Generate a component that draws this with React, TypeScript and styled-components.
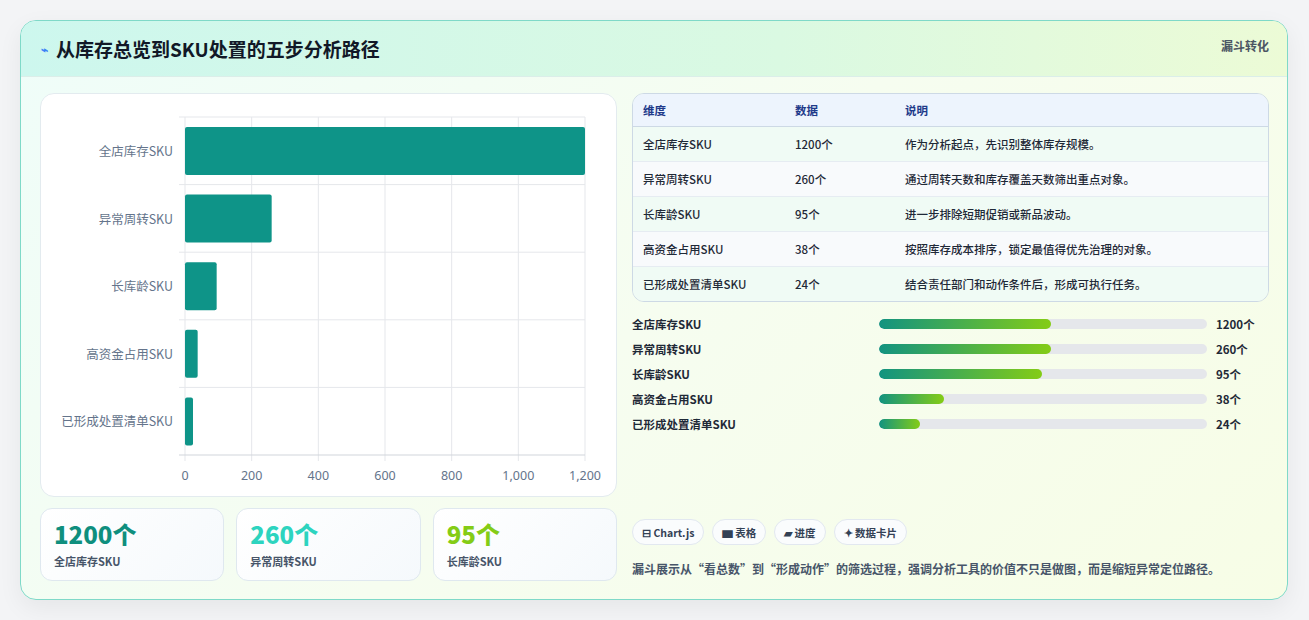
import React from "react";
import styled, { createGlobalStyle } from "styled-components";

const Global = createGlobalStyle`
  html, body { margin: 0; padding: 0; background: #f3f4f6; }
  body { font-family: "Noto Sans CJK SC", "Noto Sans", sans-serif; color: #1f2937; }
`;

const Page = styled.div`
  width: 1309px; height: 620px; box-sizing: border-box; padding: 20px 21px 20px 20px;
`;
const Card = styled.div`
  height: 580px; box-sizing: border-box; border: 1px solid #7fd9c8; border-radius: 16px; overflow: hidden;
  background: linear-gradient(135deg, #effdf9 0%, #f6fdf0 50%, #f7fde6 100%);
  box-shadow: 0 8px 24px rgba(0,0,0,0.06);
  display: flex; flex-direction: column;
`;
const Header = styled.div`
  height: 55px; flex: none; display: flex; align-items: flex-start; justify-content: space-between;
  padding: 0 18px 0 20px; border-bottom: 1px solid #dbeee9;
  background: linear-gradient(90deg, #cdf7ee 0%, #daf9e2 60%, #ecfbd6 100%);
`;
const Title = styled.h1`
  margin: 14px 0 0; font-size: 19px; font-weight: 700; color: #111827; display: flex; align-items: center; gap: 8px;
`;
const Tag = styled.span`margin-top: 16px; font-size: 12px; font-weight: 700; color: #4b5563;`;
const Body = styled.div`
  flex: 1; display: grid; grid-template-columns: 577px 637px; gap: 15px; padding: 16px 18px 18px 19px;
`;
const Left = styled.div`display: flex; flex-direction: column; gap: 11px;`;
const ChartBox = styled.div`
  height: 404px; box-sizing: border-box; background: #fff; border: 1px solid #e3ebef; border-radius: 14px; overflow: hidden;
`;
const Kpis = styled.div`display: grid; grid-template-columns: repeat(3, 1fr); gap: 12px;`;
const Kpi = styled.div`
  height: 73px; box-sizing: border-box; border: 1px solid #dfe8ef; border-radius: 12px; padding: 10px 13px;
  background: linear-gradient(135deg, #ffffff, #f5f9fc);
`;
const KpiVal = styled.div<{ $c: string }>`font-size: 24px; font-weight: 800; color: ${p => p.$c}; line-height: 30px;`;
const KpiLbl = styled.div`font-size: 11px; font-weight: 700; color: #475569; margin-top: 4px;`;

const Right = styled.div`display: flex; flex-direction: column;`;
const Table = styled.table`
  width: 100%; border-collapse: separate; border-spacing: 0; border: 1px solid #cdd9e5; border-radius: 12px; overflow: hidden;
  font-size: 11.5px; font-weight: 500;
  th { text-align: left; font-weight: 700; color: #1e3a8a; background: #edf4fd; height: 32px; padding: 0 10px; border-bottom: 1px solid #cdd9e5; }
  td { height: 34px; padding: 0 10px; color: #1f2937; border-bottom: 1px solid #e6ecf2; }
  tr:last-child td { border-bottom: none; }
  tbody tr:nth-child(odd) td { background: #f0fbf5; }
  tbody tr:nth-child(even) td { background: #f8fafc; }
`;
const Bars = styled.div`display: flex; flex-direction: column; gap: 7px; margin-top: 13px;`;
const BarRow = styled.div`display: grid; grid-template-columns: 238px 328px auto; align-items: center; gap: 0 9px; font-size: 11.5px; font-weight: 700; height: 18px;`;
const Track = styled.div`height: 10px; border-radius: 5px; background: #e5e7eb; overflow: hidden;`;
const Fill = styled.div`height: 100%; border-radius: 5px; background: linear-gradient(90deg, #129380, #84cc16);`;
const Spacer = styled.div`flex: 1;`;
const Chips = styled.div`display: flex; gap: 8px;`;
const Chip = styled.span`
  height: 26px; box-sizing: border-box; padding: 0 9px; border: 1px solid #e2e8f0; border-radius: 13px; background: #fafcfd;
  font-size: 10.5px; font-weight: 700; color: #334155; display: inline-flex; align-items: center; gap: 4px;
`;
const Note = styled.p`margin: 15px 0 4px; font-size: 12px; font-weight: 700; color: #475569;`;

const cats = ["全店库存SKU", "异常周转SKU", "长库龄SKU", "高资金占用SKU", "已形成处置清单SKU"];
const vals = [1200, 260, 95, 38, 24];
const desc = ["作为分析起点，先识别整体库存规模。", "通过周转天数和库存覆盖天数筛出重点对象。", "进一步排除短期促销或新品波动。", "按照库存成本排序，锁定最值得优先治理的对象。", "结合责任部门和动作条件后，形成可执行任务。"];
const pct = [52.3, 52.3, 49.8, 19.9, 12.5];

function Chart() {
  const x0 = 144, w = 400, y0 = 23, rh = 67.6;
  const ticks = [0, 200, 400, 600, 800, 1000, 1200];
  return (
    <svg width="576" height="404" style={{ display: "block" }}>
      {ticks.map(t => { const x = x0 + (t / 1200) * w; return <line key={t} x1={x} x2={x} y1={y0} y2={y0 + 5 * rh + 6} stroke="#e5e7eb" />; })}
      {[0, 1, 2, 3, 4].map(i => <line key={i} x1={x0 - 6} x2={x0 + w} y1={y0 + i * rh} y2={y0 + i * rh} stroke="#e5e7eb" />)}
      <line x1={x0 - 6} x2={x0 + w} y1={y0 + 5 * rh} y2={y0 + 5 * rh} stroke="#d1d5db" />
      {vals.map((v, i) => (
        <g key={i}>
          <rect x={x0} y={y0 + i * rh + 10} width={(v / 1200) * w} height={48} rx={2} fill="#0e9488" />
          <text x={132} y={y0 + i * rh + 39} textAnchor="end" fontSize="12.5" fill="#64748b" fontFamily="Noto Sans CJK SC, sans-serif">{cats[i]}</text>
        </g>
      ))}
      {ticks.map(t => <text key={t} x={x0 + (t / 1200) * w} y={386} textAnchor="middle" fontSize="12.5" fill="#64748b" fontFamily="Noto Sans, sans-serif">{t.toLocaleString("en-US")}</text>)}
    </svg>
  );
}

export default function App() {
  return (
    <Page>
      <Global />
      <Card>
        <Header>
          <Title><span style={{ color: "#3b82f6", fontSize: 12 }}>⌁</span>从库存总览到SKU处置的五步分析路径</Title>
          <Tag>漏斗转化</Tag>
        </Header>
        <Body>
          <Left>
            <ChartBox><Chart /></ChartBox>
            <Kpis>
              <Kpi><KpiVal $c="#0f8f7e">1200个</KpiVal><KpiLbl>全店库存SKU</KpiLbl></Kpi>
              <Kpi><KpiVal $c="#2dd4bf">260个</KpiVal><KpiLbl>异常周转SKU</KpiLbl></Kpi>
              <Kpi><KpiVal $c="#84cc16">95个</KpiVal><KpiLbl>长库龄SKU</KpiLbl></Kpi>
            </Kpis>
          </Left>
          <Right>
            <Table>
              <thead><tr><th style={{ width: 132 }}>维度</th><th style={{ width: 90 }}>数据</th><th>说明</th></tr></thead>
              <tbody>
                {cats.map((c, i) => <tr key={c}><td>{c}</td><td>{vals[i]}个</td><td>{desc[i]}</td></tr>)}
              </tbody>
            </Table>
            <Bars>
              {cats.map((c, i) => (
                <BarRow key={c}><span>{c}</span><Track><Fill style={{ width: pct[i] + "%" }} /></Track><span>{vals[i]}个</span></BarRow>
              ))}
            </Bars>
            <Spacer />
            <Chips>
              <Chip>⊟ Chart.js</Chip><Chip>▆ 表格</Chip><Chip>▰ 进度</Chip><Chip>✦ 数据卡片</Chip>
            </Chips>
            <Note>漏斗展示从“看总数”到“形成动作”的筛选过程，强调分析工具的价值不只是做图，而是缩短异常定位路径。</Note>
          </Right>
        </Body>
      </Card>
    </Page>
  );
}
